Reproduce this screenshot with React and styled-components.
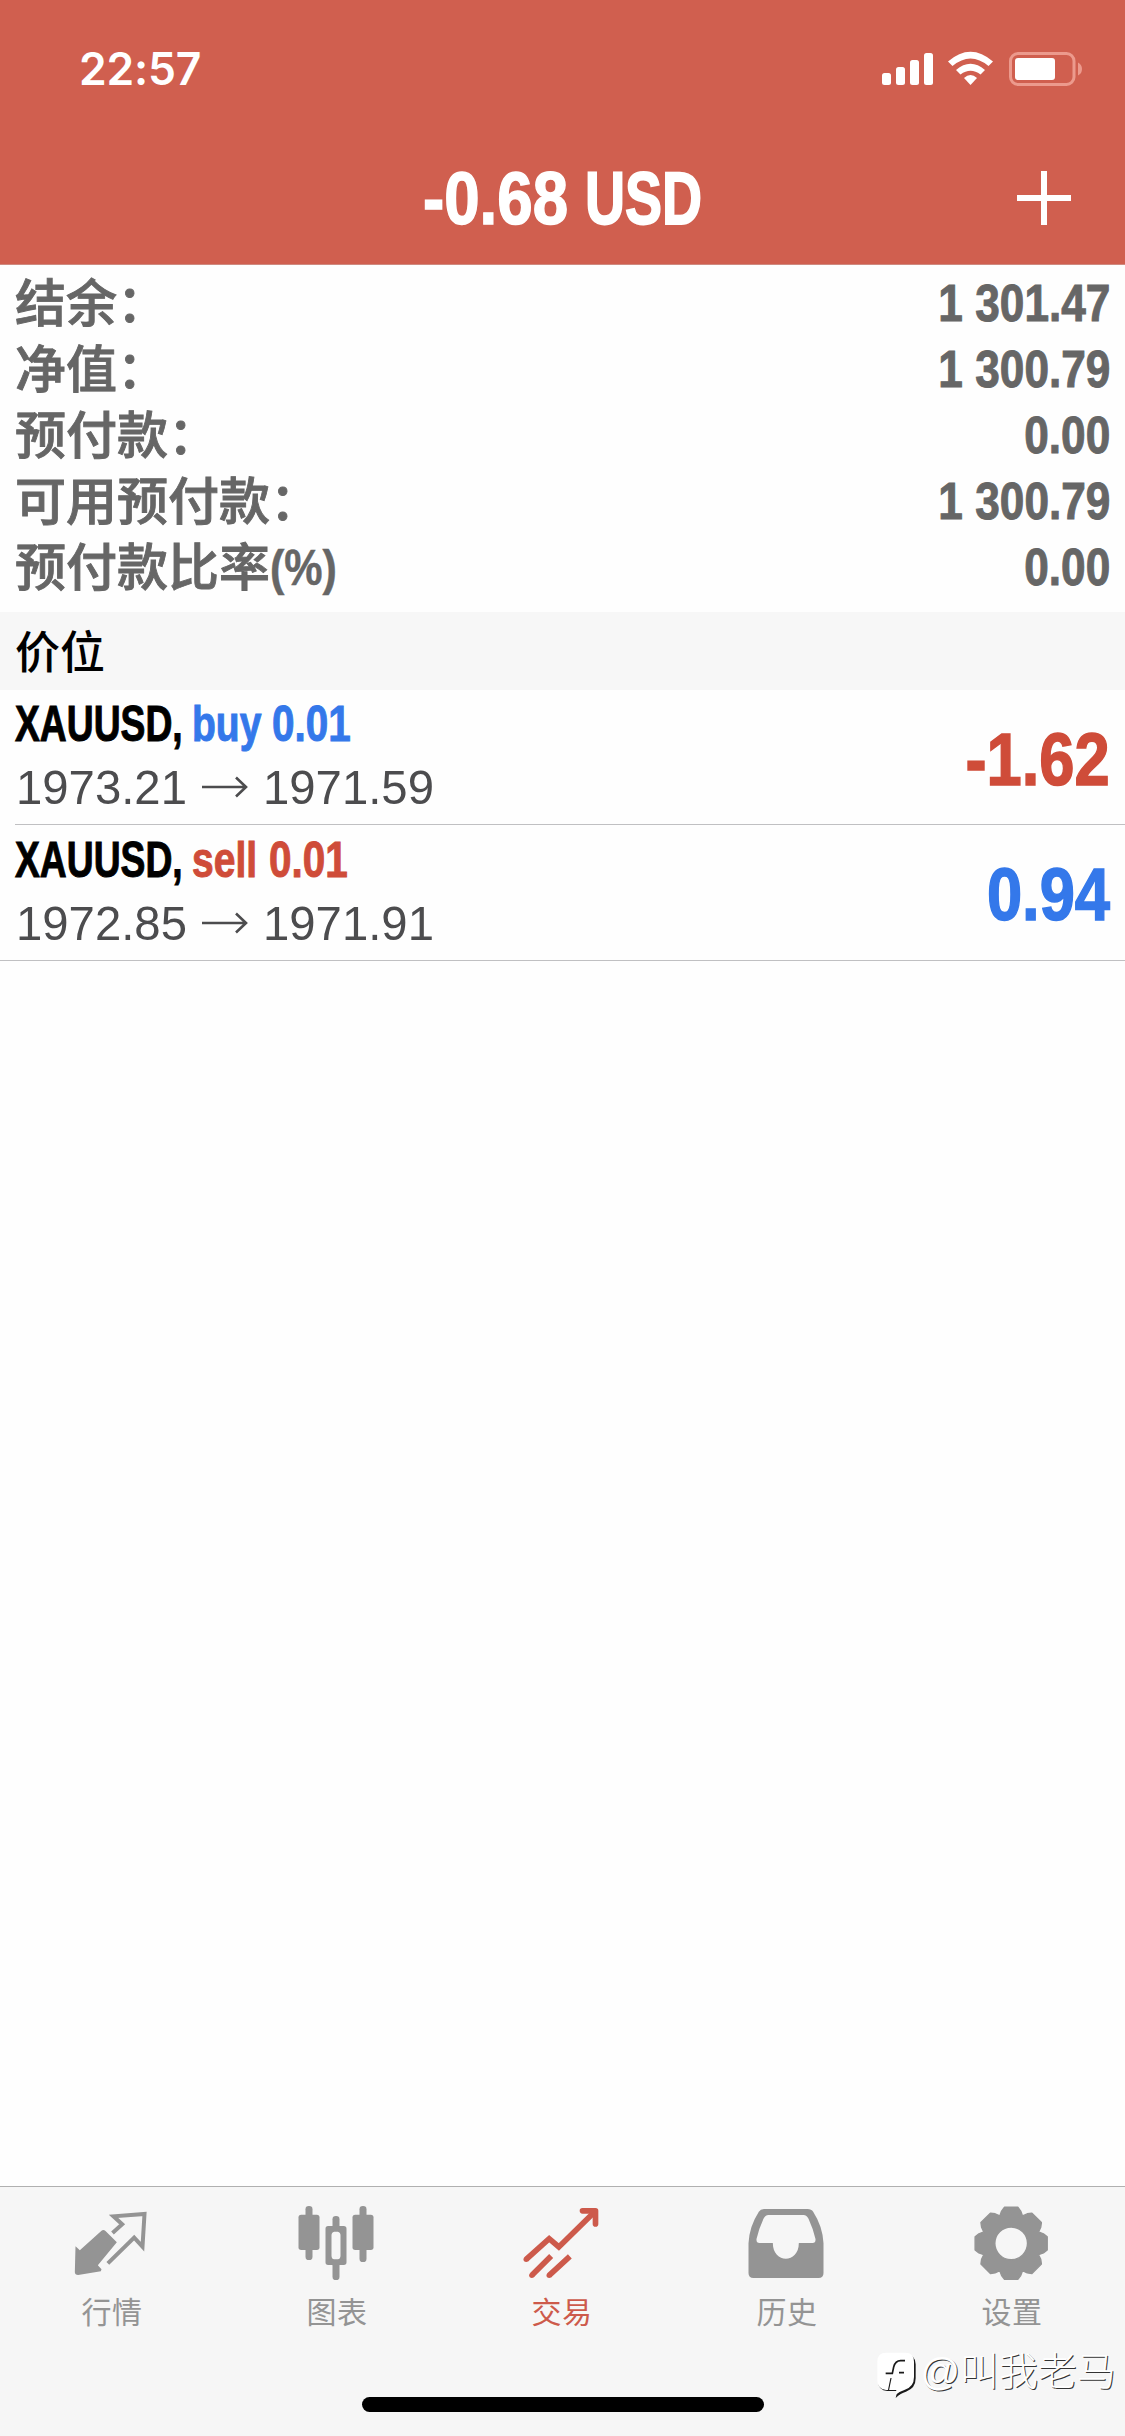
import { useState } from 'react';
import styled, { createGlobalStyle } from 'styled-components';

const GlobalStyle = createGlobalStyle`
    * {
        box-sizing: border-box;
    }

    body {
        margin: 0;
        background-color: #fefefe;
        font-family: 'Liberation Sans', 'Noto Sans CJK SC', sans-serif;
    }
`

const Screen = styled.div`
    display: flex;
    flex-direction: column;
    width: 1125px;
    height: 2436px;
    overflow: hidden;
    background-color: #fefefe;
`

const Header = styled.header`
    height: 265px;
    background-color: #d05f4f;
    border-bottom: 1px solid #cf8a80;
    color: white;
`

const StatusBar = styled.div`
    display: flex;
    justify-content: space-between;
    align-items: center;
    height: 132px;
    padding: 6px 42px 0 79px;
`

const Time = styled.span`
    font-family: 'Inter', sans-serif;
    font-size: 44.5px;
    font-weight: 600;
    line-height: 54px;
    letter-spacing: -0.2px;
`

const StatusIcons = styled.svg`
    width: 202px;
    height: 36px;
`

const TitleBar = styled.div`
    display: grid;
    grid-template-columns: 200px 1fr 200px;
    align-items: center;
    height: 132px;
`

const Title = styled.h1`
    grid-column: 2;
    display: flex;
    justify-content: center;
    margin: 0;
    padding-top: 2px;
    font-size: 74px;
    line-height: 84px;
`

const AddButton = styled.button`
    justify-self: end;
    width: 54px;
    height: 54px;
    margin: 0 54px 0 0;
    padding: 0;
    border: none;
    background: none;

    svg {
        display: block;
    }
`

// Helvetica condensed look: the glyphs are squeezed inside a box of the final width
const Condensed = styled.span`
    display: inline-flex;
    justify-content: ${props => props.$end ? 'flex-end' : 'flex-start'};
    width: ${props => props.$width}px;
    white-space: pre;

    span {
        flex: none;
        transform: scaleX(${props => props.$scale});
        transform-origin: ${props => props.$end ? 'right' : 'left'} center;
        -webkit-text-stroke: ${props => props.$stroke || 0}px currentColor;
    }
`

const Summary = styled.dl`
    height: 347px;
    margin: 0;
    padding: 5px 15px 0 15px;
    color: #666666;
`

const SummaryRow = styled.div`
    display: flex;
    justify-content: space-between;
    height: 66px;
    font-size: 52px;
    font-weight: bold;
    line-height: 67px;
`

const Label = styled.dt`
    display: flex;
    font-size: 51px;
    font-weight: 500;
    line-height: 69px;
    -webkit-text-stroke: 0.9px currentColor;
`

const Unit = styled.span`
    font-weight: bold;
    font-size: 50px;
    line-height: 68px;
`

const Amount = styled.dd`
    margin: 0;
`

const SectionTitle = styled.h2`
    height: 78px;
    margin: 0;
    padding-left: 15px;
    background-color: #f7f7f7;
    color: black;
    font-family: 'Noto Sans CJK SC', sans-serif;
    font-size: 45px;
    font-weight: 500;
    line-height: 76px;
`

const Positions = styled.ul`
    flex: 1;
    margin: 0;
    padding: 0;
    list-style: none;
`

const Position = styled.li`
    display: flex;
    justify-content: space-between;
    align-items: center;
    height: 135px;
    margin-left: ${props => props.$last ? 0 : 15}px;
    padding-right: 15px;
    padding-left: ${props => props.$last ? 15 : 0}px;
    border-bottom: 1px solid #c0c0c2;

    & + & {
        height: 136px;
    }
`

const Details = styled.div`
    padding-bottom: 2px;
`

const Symbol = styled.div`
    display: flex;
    height: 62px;
    font-size: 50px;
    font-weight: bold;
    line-height: 62px;
    color: black;
`

const Side = styled.span`
    display: flex;
    color: ${props => props.$side === 'buy' ? '#3478ea' : '#cf4c39'};
`

const Prices = styled.div`
    display: flex;
    align-items: center;
    height: 64px;
    padding-left: 1px;
    font-size: 49px;
    line-height: 64px;
    color: #4c4c4e;
`

const Arrow = styled.svg`
    width: 46px;
    height: 22px;
    margin: 0 15px 0 14px;
`

const Profit = styled.div`
    padding-top: 5px;
    font-size: 74px;
    font-weight: bold;
    line-height: 84px;
    color: ${props => props.$value < 0 ? '#cf4c39' : '#3478ea'};
`

const Footer = styled.footer`
    position: relative;
    height: 250px;
    border-top: 1px solid #b0b0b0;
    background-color: #f6f6f6;
`

const Tabs = styled.nav`
    display: grid;
    grid-template-columns: repeat(5, 1fr);
    height: 210px;
    padding-top: 15px;
`

const Tab = styled.button`
    display: flex;
    flex-direction: column;
    align-items: center;
    padding: 0 1px 0 0;
    border: none;
    background: none;
    color: ${props => props.$active ? '#cd5a4b' : '#949494'};
    font-family: 'Noto Sans CJK SC', sans-serif;
    font-size: 30px;
    font-weight: 400;
    line-height: 44px;
    letter-spacing: 0.6px;

    svg {
        width: 80px;
        height: 80px;
        margin-bottom: 6px;
    }
`

const HomeIndicator = styled.div`
    width: 402px;
    height: 15px;
    margin: 0 auto;
    border-radius: 8px;
    background-color: black;
`

const Watermark = styled.div`
    position: absolute;
    top: 157px;
    right: 9px;
    display: flex;
    align-items: center;
    height: 56px;
    color: white;
    font-size: 39px;
    font-weight: 300;
    line-height: 56px;
    text-shadow: 1px 1px 0.5px #333333;

    svg {
        width: 42px;
        height: 48px;
        margin: 6px 2px 0 0;
    }
`

const QuotesIcon = () => (
    <svg viewBox="217.5 96 240 240" fill="none">
        <path d="M228 229 L241 241 L306 182 Q312 178 318 183 L352 217 L295 286 L306 298 L304 304 L236 315 Q226 315 226 306 Z" fill="currentColor" />
        <path d="M339 189 L368 163 L342 139 L435 132 L429 230 L404 203 L325 280" stroke="currentColor" strokeWidth="12" />
    </svg>
)

const ChartIcon = () => (
    <svg viewBox="892.5 96 240 240" fill="currentColor">
        <rect x="918" y="108" width="21" height="162" rx="10" />
        <rect x="897" y="134" width="63" height="106" rx="8" />
        <rect x="1080" y="108" width="21" height="168" rx="10" />
        <rect x="1059" y="134" width="63" height="106" rx="8" />
        <rect x="999" y="138" width="21" height="40" rx="10" />
        <rect x="999" y="276" width="21" height="54" rx="10" />
        <path fillRule="evenodd" d="M986 168 H1033 Q1041 168 1041 176 V277 Q1041 285 1033 285 H986 Q978 285 978 277 V176 Q978 168 986 168 Z M1004 185 Q996 187 996 196 V257 Q996 266 1004 268 H1015 Q1023 266 1023 257 V196 Q1023 187 1015 185 Z" />
    </svg>
)

const TradeIcon = () => (
    <svg viewBox="217.5 96 240 240" fill="none" stroke="currentColor" strokeWidth="17" strokeLinejoin="miter">
        <path d="M230 268 L299 206 L328 231 L434 127" />
        <circle cx="230" cy="268" r="8" fill="currentColor" stroke="none" />
        <path d="M399 122.5 H438 V162" strokeLinecap="round" strokeLinejoin="round" />
        <path d="M247 316 L305 258 M299 316 L361 259" />
        <circle cx="247" cy="316" r="8" fill="currentColor" stroke="none" />
        <circle cx="299" cy="316" r="8" fill="currentColor" stroke="none" />
    </svg>
)

const HistoryIcon = () => (
    <svg viewBox="892.5 96 240 240" fill="currentColor">
        <path fillRule="evenodd" d="M945 117 H1074 Q1086 117 1091 125 Q1120 170 1122 220 V309 Q1122 324 1107 324 H912 Q897 324 897 309 V220 Q899 170 928 125 Q933 117 945 117 Z M957 135 Q947 136 942 146 Q928 176 921 207 Q920 219 930 219 H970 C970 282 1048 282 1048 219 H1089 Q1099 219 1098 207 Q1091 176 1077 146 Q1072 136 1062 135 Z" />
    </svg>
)

// [radius, angle] of the corners on one tooth of the gear
const TOOTH = [[89, -22.5], [101, -16.5], [110, -10.5], [110, 10.5], [101, 16.5]];

const gearPath = () => {
    const points = [];
    for (let i = 0; i < 8; i++) {
        TOOTH.forEach(([radius, angle]) => {
            const a = (i * 45 + angle) * Math.PI / 180;
            points.push(`${(560 + radius * Math.sin(a)).toFixed(1)} ${(220 - radius * Math.cos(a)).toFixed(1)}`);
        });
    }
    return `M${points.join('L')}Z`;
}

const SettingsIcon = () => (
    <svg viewBox="442.5 96 240 240" fill="currentColor">
        <path fillRule="evenodd" stroke="currentColor" strokeWidth="4" strokeLinejoin="round" d={`${gearPath()} M511 220 a49 49 0 1 0 98 0 a49 49 0 1 0 -98 0Z`} />
    </svg>
)

const LogoIcon = () => (
    <svg viewBox="156 546 126 144">
        <path d="M190 557 H246 Q275 557 275 586 V628 Q275 658 246 668 Q230 672 215 687 L220 666 H190 Q163 664 163 640 V582 Q163 557 190 557Z" fill="#1a1a1a" />
        <path d="M186 551 H244 Q270 551 270 578 V624 Q270 654 241 663 Q225 668 214 678 L217 663 H186 Q160 659 160 636 V578 Q160 551 186 551Z" fill="white" />
        <path d="M185 613 H205 L209 594 Q214 575 230 575 H243 M225 611 H240" fill="none" stroke="#1a1a1a" strokeWidth="5" />
        <path d="M201 627 L193 666" stroke="#1a1a1a" strokeWidth="3.5" />
    </svg>
)

const summary = [
    { label: '结余：', value: '1 301.47' },
    { label: '净值：', value: '1 300.79' },
    { label: '预付款：', value: '0.00' },
    { label: '可用预付款：', value: '1 300.79' },
    { label: '预付款比率', unit: '(%)', value: '0.00' },
];

const positions = [
    { id: 1, side: 'buy', sideWidth: 80, volume: '0.01', open: '1973.21', current: '1971.59', profit: '-1.62' },
    { id: 2, side: 'sell', sideWidth: 77, volume: '0.01', open: '1972.85', current: '1971.91', profit: '0.94' },
];

const tabs = [
    { name: '行情', Icon: QuotesIcon },
    { name: '图表', Icon: ChartIcon },
    { name: '交易', Icon: TradeIcon },
    { name: '历史', Icon: HistoryIcon },
    { name: '设置', Icon: SettingsIcon },
];

const App = () => {
    const [active, setActive] = useState('交易');

    const mappedSummary = summary.map((row) => {
        return (
            <SummaryRow key={row.label}>
                <Label>
                    {row.label}
                    {row.unit && <Unit><Condensed $width={68} $scale={0.86} $stroke={0.5}><span>{row.unit}</span></Condensed></Unit>}
                </Label>
                <Amount>
                    <Condensed $width={200} $scale={0.85} $stroke={1} $end><span>{row.value}</span></Condensed>
                </Amount>
            </SummaryRow>
        )
    });

    const mappedPositions = positions.map((item, index) => {
        return (
            <Position key={item.id} $last={index === positions.length - 1}>
                <Details>
                    <Symbol>
                        <Condensed $width={177} $scale={0.745} $stroke={1}><span>XAUUSD,</span></Condensed>
                        <Side $side={item.side}>
                            <Condensed $width={item.sideWidth} $scale={0.78} $stroke={1}><span>{item.side}</span></Condensed>
                            <Condensed $width={80} $scale={0.81} $stroke={1}><span>{item.volume}</span></Condensed>
                        </Side>
                    </Symbol>
                    <Prices>
                        <Condensed $width={172} $scale={0.965}><span>{item.open}</span></Condensed>
                        <Arrow viewBox="0 0 46 22" fill="none" stroke="currentColor" strokeWidth="2.6">
                            <path d="M0 11 H44 M34 1.5 L44 11 L34 20.5" />
                        </Arrow>
                        <Condensed $width={172} $scale={0.965}><span>{item.current}</span></Condensed>
                    </Prices>
                </Details>
                <Profit $value={Number(item.profit)}>
                    <Condensed $width={160} $scale={0.855} $stroke={1.5} $end><span>{item.profit}</span></Condensed>
                </Profit>
            </Position>
        )
    });

    return (
        <Screen>
            <GlobalStyle />
            <Header>
                <StatusBar>
                    <Time>22:57</Time>
                    <StatusIcons viewBox="881 51 202 36" fill="white">
                        <rect x="882" y="73" width="9" height="12" rx="2.5" />
                        <rect x="896" y="67" width="9" height="18" rx="2.5" />
                        <rect x="910" y="60" width="9" height="25" rx="2.5" />
                        <rect x="924" y="53" width="9" height="32" rx="2.5" />
                        <path d="M948 61.5 Q970.5 42 993 61.5 L988.5 66 Q970.5 51 952.5 66Z" />
                        <path d="M956 70 Q970.5 57.5 985 70 L980.5 74.5 Q970.5 67 960.5 74.5Z" />
                        <path d="M964 78 Q970.5 72 977 78 L970.5 85Z" />
                        <rect x="1010.5" y="53.5" width="63.5" height="31" rx="7.5" fill="none" stroke="#ec9a8d" strokeWidth="3" />
                        <rect x="1015" y="58" width="40" height="22" rx="3" />
                        <path d="M1078 62.5 Q1082 64.5 1082 69 Q1082 73.5 1078 75.5Z" fill="#ec9a8d" />
                    </StatusIcons>
                </StatusBar>
                <TitleBar>
                    <Title>
                        <Condensed $width={162} $scale={0.86} $stroke={1.5}><span>-0.68</span></Condensed>
                        <Condensed $width={118} $scale={0.75} $stroke={1.8}><span>USD</span></Condensed>
                    </Title>
                    <AddButton>
                        <svg width="54" height="54" stroke="white" strokeWidth="6">
                            <path d="M0 27 H54 M27 0 V54" />
                        </svg>
                    </AddButton>
                </TitleBar>
            </Header>
            <Summary>{mappedSummary}</Summary>
            <SectionTitle>价位</SectionTitle>
            <Positions>{mappedPositions}</Positions>
            <Footer>
                <Tabs>
                    {tabs.map(({ name, Icon }) => (
                        <Tab key={name} $active={name === active} onClick={() => setActive(name)}>
                            <Icon />
                            {name}
                        </Tab>
                    ))}
                </Tabs>
                <HomeIndicator />
                <Watermark>
                    <LogoIcon />
                    @叫我老马
                </Watermark>
            </Footer>
        </Screen>
    )
}

export default App;
